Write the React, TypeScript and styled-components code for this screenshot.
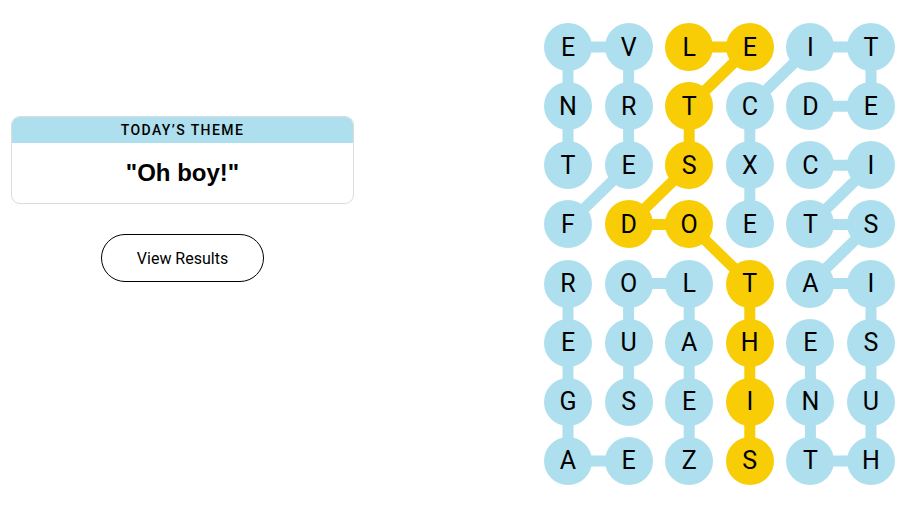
import styled, { createGlobalStyle } from 'styled-components';

const GlobalStyle = createGlobalStyle`
  body {
    margin: 0;
    background: #ffffff;
    font-family: Roboto, 'Liberation Sans', sans-serif;
    color: #000000;
  }
`;

const BLUE = '#aedfee';
const YELLOW = '#f8cd05';

const CELL = 48;
const STEP_X = 60.6;
const STEP_Y = 59.14;

const letters = [
  'EVLEIT',
  'NRTCDE',
  'TESXCI',
  'FDOETS',
  'ROLTAI',
  'EUAHES',
  'GSEINU',
  'AEZSTH',
];

// each word is a path of [row, col] cells
const words: { path: [number, number][]; spangram?: boolean }[] = [
  { path: [[3, 0], [2, 1], [1, 1], [0, 1], [0, 0], [1, 0], [2, 0]] },
  { path: [[3, 3], [2, 3], [1, 3], [0, 4], [0, 5], [1, 5], [1, 4]] },
  {
    path: [
      [5, 4], [6, 4], [7, 4], [7, 5], [6, 5], [5, 5],
      [4, 5], [4, 4], [3, 5], [3, 4], [2, 5], [2, 4],
    ],
  },
  { path: [[7, 2], [6, 2], [5, 2], [4, 2], [4, 1], [5, 1], [6, 1]] },
  { path: [[7, 1], [7, 0], [6, 0], [5, 0], [4, 0]] },
  {
    path: [
      [0, 2], [0, 3], [1, 2], [2, 2], [3, 1], [3, 2],
      [4, 3], [5, 3], [6, 3], [7, 3],
    ],
    spangram: true,
  },
];

const spanCells = new Set(
  words.filter((w) => w.spangram).flatMap((w) => w.path.map(([r, c]) => `${r}-${c}`))
);

const Page = styled.div`
  display: flex;
  align-items: flex-start;
  width: 907px;
  box-sizing: border-box;
  padding: 23px 12px 0 11px;
`;

const Side = styled.div`
  display: flex;
  flex-direction: column;
  align-items: center;
  width: 343px;
  margin-top: 93px;
  gap: 30px;
`;

const ThemeCard = styled.div`
  display: flex;
  flex-direction: column;
  width: 100%;
  height: 88px;
  box-sizing: border-box;
  border: 1px solid #dcdcdc;
  border-radius: 9px;
  overflow: hidden;
`;

const ThemeHeader = styled.div`
  background: ${BLUE};
  height: 26px;
  display: flex;
  align-items: center;
  justify-content: center;
  font-size: 14px;
  font-weight: 500;
  letter-spacing: 1.4px;
  text-transform: uppercase;
`;

const ThemeBody = styled.div`
  flex: 1;
  display: flex;
  align-items: center;
  justify-content: center;
  font-family: 'Liberation Sans', Arial, sans-serif;
  font-size: 24px;
  font-weight: 700;
`;

const ResultsButton = styled.button`
  width: 163px;
  height: 48px;
  border: 1px solid #000;
  border-radius: 24px;
  background: #fff;
  font-family: Roboto, 'Liberation Sans', sans-serif;
  font-size: 16px;
  color: #000;
  cursor: pointer;
`;

const Board = styled.div`
  position: relative;
  margin-left: auto;
  width: ${5 * STEP_X + CELL}px;
  height: ${7 * STEP_Y + CELL}px;
`;

const Lines = styled.svg`
  position: absolute;
  inset: 0;
  width: 100%;
  height: 100%;
`;

const Grid = styled.div`
  position: relative;
  display: grid;
  grid-template-columns: repeat(6, ${CELL}px);
  grid-auto-rows: ${CELL}px;
  column-gap: ${STEP_X - CELL}px;
  row-gap: ${STEP_Y - CELL}px;
`;

const Letter = styled.div<{ $found: boolean }>`
  width: ${CELL}px;
  height: ${CELL}px;
  border-radius: 50%;
  background: ${(p) => (p.$found ? YELLOW : BLUE)};
  display: flex;
  align-items: center;
  justify-content: center;
  font-size: 25px;
  font-weight: 400;
  color: #000;
`;

const center = (r: number, c: number) => [CELL / 2 + c * STEP_X, CELL / 2 + r * STEP_Y];

export default function App() {
  return (
    <>
      <GlobalStyle />
      <Page>
        <Side>
          <ThemeCard>
            <ThemeHeader>Today’s Theme</ThemeHeader>
            <ThemeBody>"Oh boy!"</ThemeBody>
          </ThemeCard>
          <ResultsButton>View Results</ResultsButton>
        </Side>
        <Board>
          <Lines>
            {words.map((w, i) => (
              <polyline
                key={i}
                points={w.path.map(([r, c]) => center(r, c).join(',')).join(' ')}
                fill="none"
                stroke={w.spangram ? YELLOW : BLUE}
                strokeWidth={11}
                strokeLinejoin="round"
              />
            ))}
          </Lines>
          <Grid>
            {letters.map((row, r) =>
              row.split('').map((ch, c) => (
                <Letter key={`${r}-${c}`} $found={spanCells.has(`${r}-${c}`)}>
                  {ch}
                </Letter>
              ))
            )}
          </Grid>
        </Board>
      </Page>
    </>
  );
}
